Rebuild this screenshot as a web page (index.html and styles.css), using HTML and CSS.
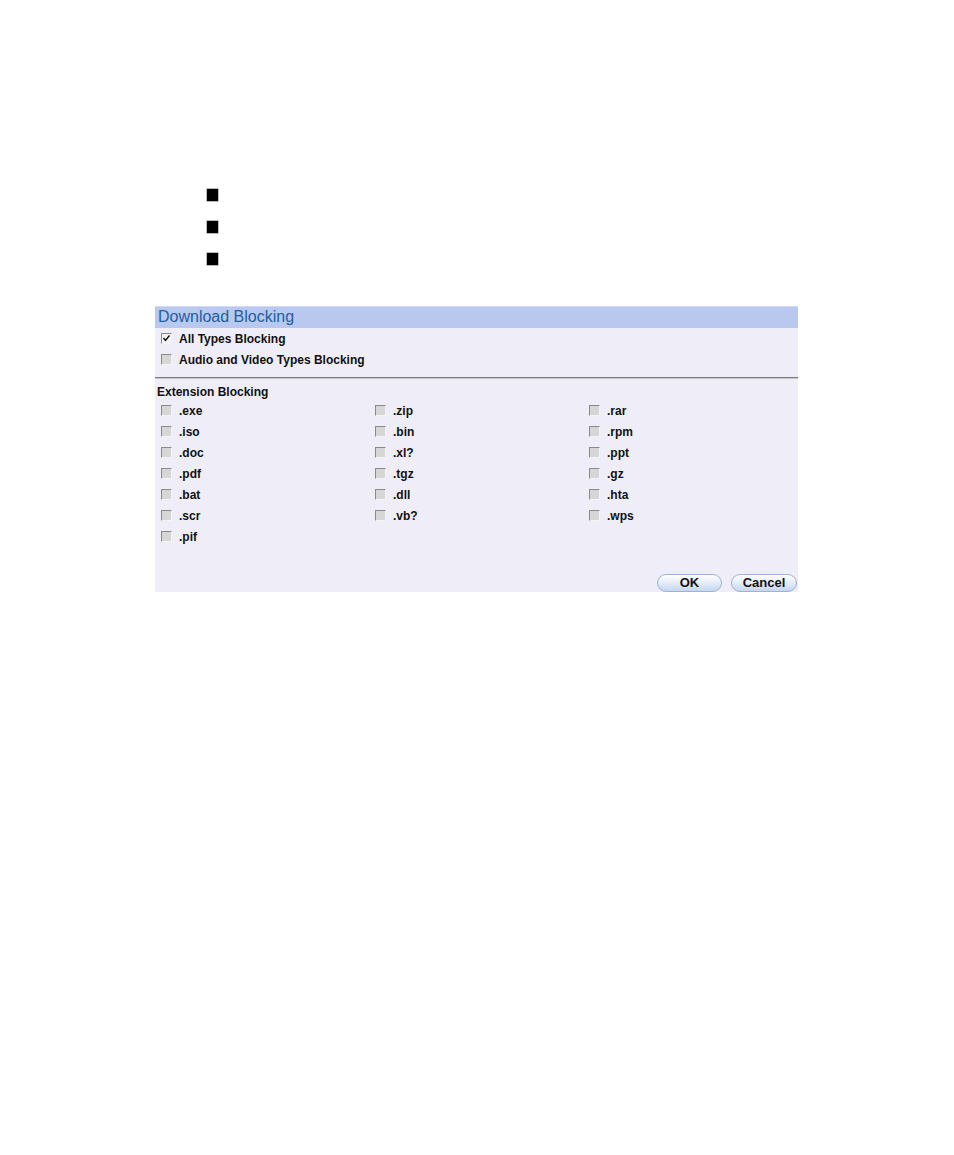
FILE: index.html
```html
<!DOCTYPE html>
<html>
<head>
<meta charset="utf-8">
<link rel="stylesheet" href="styles.css">
</head>
<body>
<ul class="bullets">
  <li></li>
  <li></li>
  <li></li>
</ul>
<div class="panel">
  <div class="panel-head">Download Blocking</div>
  <div class="types">
    <label class="opt"><span class="cb checked"><svg viewBox="0 0 7 7" width="7" height="7"><path d="M0.5 3 L2.5 5.5 L6.5 0.5" fill="none" stroke="#000" stroke-width="1.3"/></svg></span>All Types Blocking</label>
    <label class="opt"><span class="cb"></span>Audio and Video Types Blocking</label>
  </div>
  <div class="sep"></div>
  <div class="ext-title">Extension Blocking</div>
  <div class="ext-grid">
    <label class="opt"><span class="cb"></span>.exe</label>
    <label class="opt"><span class="cb"></span>.zip</label>
    <label class="opt"><span class="cb"></span>.rar</label>
    <label class="opt"><span class="cb"></span>.iso</label>
    <label class="opt"><span class="cb"></span>.bin</label>
    <label class="opt"><span class="cb"></span>.rpm</label>
    <label class="opt"><span class="cb"></span>.doc</label>
    <label class="opt"><span class="cb"></span>.xl?</label>
    <label class="opt"><span class="cb"></span>.ppt</label>
    <label class="opt"><span class="cb"></span>.pdf</label>
    <label class="opt"><span class="cb"></span>.tgz</label>
    <label class="opt"><span class="cb"></span>.gz</label>
    <label class="opt"><span class="cb"></span>.bat</label>
    <label class="opt"><span class="cb"></span>.dll</label>
    <label class="opt"><span class="cb"></span>.hta</label>
    <label class="opt"><span class="cb"></span>.scr</label>
    <label class="opt"><span class="cb"></span>.vb?</label>
    <label class="opt"><span class="cb"></span>.wps</label>
    <label class="opt"><span class="cb"></span>.pif</label>
  </div>
  <div class="actions">
    <button class="btn btn-ok">OK</button>
    <button class="btn btn-cancel">Cancel</button>
  </div>
</div>
</body>
</html>
```
FILE: styles.css
```css
html, body {
  margin: 0;
  padding: 0;
  background: #ffffff;
}
body {
  width: 954px;
  height: 1155px;
  font-family: "Liberation Sans", Arial, sans-serif;
}
.bullets {
  list-style: none;
  margin: 0;
  padding: 189px 0 0 207px;
  display: flex;
  flex-direction: column;
  gap: 20px;
}
.bullets li {
  width: 11px;
  height: 12px;
  background: #000;
  box-shadow: 0 0 0 0.5px #777;
}
.panel {
  margin: 41px 0 0 155px;
  width: 643px;
  height: 286px;
  background: #efeef8;
  display: flex;
  flex-direction: column;
}
.panel-head {
  height: 22px;
  box-sizing: border-box;
  border-top: 1px solid #d2dcf4;
  background: #b8c8ef;
  color: #1f5f9e;
  font-size: 16px;
  line-height: 20px;
  padding-left: 3px;
}
.types {
  display: flex;
  flex-direction: column;
}
.opt {
  height: 21px;
  display: flex;
  align-items: center;
  padding-left: 6px;
  font-size: 12px;
  font-weight: bold;
  color: #111;
}
.cb {
  width: 11px;
  height: 11px;
  box-sizing: border-box;
  border-top: 1px solid #8a8a8a;
  border-left: 1px solid #8a8a8a;
  border-right: 1px solid #f4f4f4;
  border-bottom: 1px solid #f4f4f4;
  background: #d6d6d6;
  margin-right: 7px;
  display: flex;
  align-items: center;
  justify-content: center;
  flex: none;
}
.cb.checked {
  background: #f4f4f4;
}
.sep {
  margin-top: 7px;
  height: 1px;
  border-top: 1px solid #7c7c7c;
  background: #c8c8cc;
}
.ext-title {
  margin-top: 6px;
  height: 15px;
  line-height: 15px;
  padding-left: 2px;
  font-size: 12px;
  font-weight: bold;
  color: #111;
}
.ext-grid {
  display: grid;
  grid-template-columns: 214px 214px 215px;
}
.actions {
  margin-top: auto;
  display: flex;
  justify-content: flex-end;
  gap: 9px;
  padding-right: 1px;
}
.btn {
  height: 18px;
  border: 1px solid #9bb3d6;
  border-radius: 9px;
  background: linear-gradient(#ffffff 0%, #e6eefa 45%, #c5d6ef 100%);
  font-family: "Liberation Sans", Arial, sans-serif;
  font-size: 13px;
  font-weight: bold;
  color: #111;
  padding: 0;
  line-height: 16px;
}
.btn-ok {
  width: 65px;
}
.btn-cancel {
  width: 66px;
}
```
